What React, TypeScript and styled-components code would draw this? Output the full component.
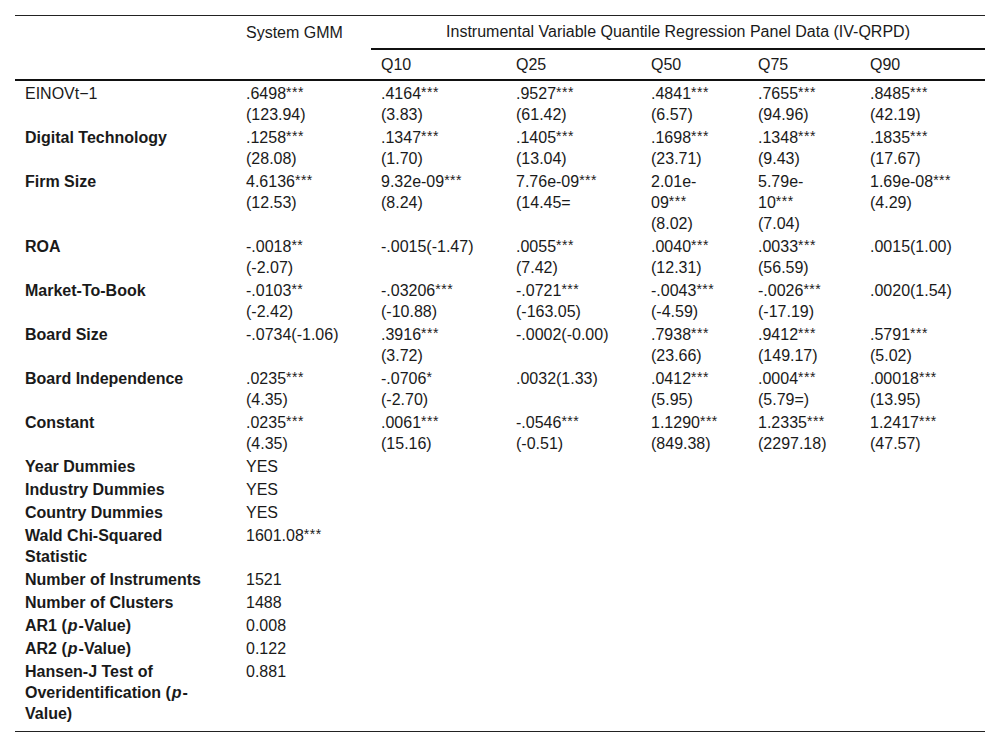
import styled, { createGlobalStyle } from "styled-components";

const GlobalStyle = createGlobalStyle`
  html, body {
    margin: 0;
    padding: 0;
    background: #fff;
  }
  body {
    font-family: "Liberation Sans", Arial, sans-serif;
    color: #1a1a1a;
  }
`;

const Page = styled.div`
  padding: 15px 15px 0 15px;
`;

const Table = styled.table`
  width: 970px;
  border-collapse: collapse;
  table-layout: fixed;
  font-size: 16px;
  line-height: 21px;
  border-top: 1px solid #222;
  border-bottom: 1px solid #222;
`;

const HeadCell = styled.th<{ $center?: boolean; $rule?: boolean }>`
  font-weight: normal;
  text-align: ${p => (p.$center ? "center" : "left")};
  padding: 0 10px;
  vertical-align: middle;
  border-bottom: ${p => (p.$rule ? "2px solid #111" : "none")};
`;

const TopRow = styled.tr`
  height: 33px;
`;

const QuantRow = styled.tr`
  height: 31px;
  border-bottom: 2px solid #111;
`;

const Cell = styled.td<{ $label?: boolean }>`
  padding: 2px 10px 0 10px;
  vertical-align: top;
  font-weight: ${p => (p.$label ? "bold" : "normal")};
`;

const LastRow = styled.tr`
  td {
    padding-bottom: 7px;
  }
`;

const Stars = styled.span`
  font-size: 14px;
  line-height: 0;
  letter-spacing: 0.5px;
  position: relative;
  top: -2px;
`;

const Italic = styled.i`
  font-style: italic;
  padding: 0 1px;
`;

const widths = [221, 135, 135, 135, 107, 112, 125];

type Value = string | null;

const fmt = (v: Value) => {
  if (!v) return null;
  const parts = v.split(/(\*+)/);
  return parts.map((p, i) =>
    /^\*+$/.test(p) ? <Stars key={i}>{p}</Stars> : p.split("\n").map((s, j, arr) => (
      <span key={`${i}-${j}`}>
        {s}
        {j < arr.length - 1 && <br />}
      </span>
    )),
  );
};

type Row = { label: React.ReactNode; bold?: boolean; values: Value[] };

const rows: Row[] = [
  {
    label: "EINOVt−1",
    values: [".6498***\n(123.94)", ".4164***\n(3.83)", ".9527***\n(61.42)", ".4841***\n(6.57)", ".7655***\n(94.96)", ".8485***\n(42.19)"],
  },
  {
    label: "Digital Technology",
    bold: true,
    values: [".1258***\n(28.08)", ".1347***\n(1.70)", ".1405***\n(13.04)", ".1698***\n(23.71)", ".1348***\n(9.43)", ".1835***\n(17.67)"],
  },
  {
    label: "Firm Size",
    bold: true,
    values: ["4.6136***\n(12.53)", "9.32e-09***\n(8.24)", "7.76e-09***\n(14.45=", "2.01e-\n09***\n(8.02)", "5.79e-\n10***\n(7.04)", "1.69e-08***\n(4.29)"],
  },
  {
    label: "ROA",
    bold: true,
    values: ["-.0018**\n(-2.07)", "-.0015(-1.47)", ".0055***\n(7.42)", ".0040***\n(12.31)", ".0033***\n(56.59)", ".0015(1.00)"],
  },
  {
    label: "Market-To-Book",
    bold: true,
    values: ["-.0103**\n(-2.42)", "-.03206***\n(-10.88)", "-.0721***\n(-163.05)", "-.0043***\n(-4.59)", "-.0026***\n(-17.19)", ".0020(1.54)"],
  },
  {
    label: "Board Size",
    bold: true,
    values: ["-.0734(-1.06)", ".3916***\n(3.72)", "-.0002(-0.00)", ".7938***\n(23.66)", ".9412***\n(149.17)", ".5791***\n(5.02)"],
  },
  {
    label: "Board Independence",
    bold: true,
    values: [".0235***\n(4.35)", "-.0706*\n(-2.70)", ".0032(1.33)", ".0412***\n(5.95)", ".0004***\n(5.79=)", ".00018***\n(13.95)"],
  },
  {
    label: "Constant",
    bold: true,
    values: [".0235***\n(4.35)", ".0061***\n(15.16)", "-.0546***\n(-0.51)", "1.1290***\n(849.38)", "1.2335***\n(2297.18)", "1.2417***\n(47.57)"],
  },
  { label: "Year Dummies", bold: true, values: ["YES", null, null, null, null, null] },
  { label: "Industry Dummies", bold: true, values: ["YES", null, null, null, null, null] },
  { label: "Country Dummies", bold: true, values: ["YES", null, null, null, null, null] },
  { label: "Wald Chi-Squared Statistic", bold: true, values: ["1601.08***", null, null, null, null, null] },
  { label: "Number of Instruments", bold: true, values: ["1521", null, null, null, null, null] },
  { label: "Number of Clusters", bold: true, values: ["1488", null, null, null, null, null] },
  {
    label: (
      <>
        AR1 (<Italic>p</Italic>-Value)
      </>
    ),
    bold: true,
    values: ["0.008", null, null, null, null, null],
  },
  {
    label: (
      <>
        AR2 (<Italic>p</Italic>-Value)
      </>
    ),
    bold: true,
    values: ["0.122", null, null, null, null, null],
  },
];

export default function App() {
  return (
    <Page>
      <GlobalStyle />
      <Table>
        <colgroup>
          {widths.map((w, i) => (
            <col key={i} style={{ width: w }} />
          ))}
        </colgroup>
        <thead>
          <TopRow>
            <HeadCell />
            <HeadCell>System GMM</HeadCell>
            <HeadCell colSpan={5} $center $rule>
              Instrumental Variable Quantile Regression Panel Data (IV-QRPD)
            </HeadCell>
          </TopRow>
          <QuantRow>
            <HeadCell />
            <HeadCell />
            <HeadCell>Q10</HeadCell>
            <HeadCell>Q25</HeadCell>
            <HeadCell>Q50</HeadCell>
            <HeadCell>Q75</HeadCell>
            <HeadCell>Q90</HeadCell>
          </QuantRow>
        </thead>
        <tbody>
          {rows.map((r, i) => (
            <tr key={i}>
              <Cell $label={r.bold}>{r.label}</Cell>
              {r.values.map((v, j) => (
                <Cell key={j}>{fmt(v)}</Cell>
              ))}
            </tr>
          ))}
          <LastRow>
            <Cell $label>
              Hansen-J Test of Overidentification (<Italic>p</Italic>-Value)
            </Cell>
            <Cell>0.881</Cell>
            <Cell />
            <Cell />
            <Cell />
            <Cell />
            <Cell />
          </LastRow>
        </tbody>
      </Table>
    </Page>
  );
}
